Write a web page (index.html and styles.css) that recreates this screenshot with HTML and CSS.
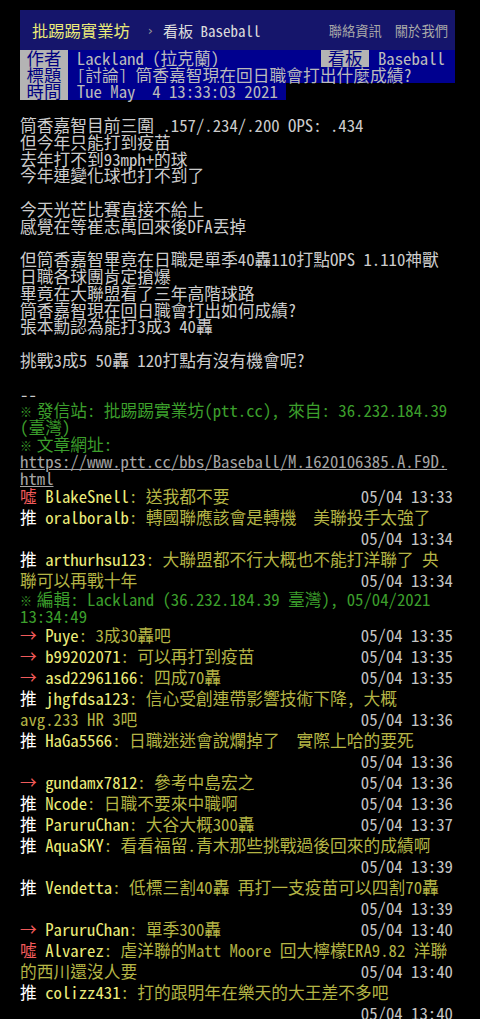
FILE: index.html
```html
<!DOCTYPE html>
<html lang="zh-Hant-TW">
<head>
    <meta charset="UTF-8">
    <meta name="viewport" content="width=device-width, initial-scale=1.0">
    <title>[討論] 筒香嘉智現在回日職會打出什麼成績? - 看板 Baseball - 批踢踢實業坊</title>
    <link rel="stylesheet" href="styles.css">
</head>
<body>
    <div class="page">
        <!-- Top bar -->
        <div class="topbar">
            <a class="logo" href="/bbs/">批踢踢實業坊</a>
            <span class="sep">›</span>
            <a class="board" href="/bbs/Baseball/index.html"><span class="board-label">看板 </span>Baseball</a>
            <div class="topbar-right">
                <a href="/about.html">聯絡資訊</a>
                <a href="/contact.html">關於我們</a>
            </div>
        </div>

        <!-- Article meta -->
        <div class="meta">
            <div class="metaline full">
                <span class="meta-tag">作者</span><span class="meta-value">Lackland (拉克蘭)</span>
                <span class="metaline-right"><span class="meta-tag">看板</span><span class="meta-value">Baseball</span></span>
            </div>
            <div class="metaline full">
                <span class="meta-tag">標題</span><span class="meta-value">[討論] 筒香嘉智現在回日職會打出什麼成績?</span>
            </div>
            <div class="metaline">
                <span class="meta-tag">時間</span><span class="meta-value">Tue May  4 13:33:03 2021</span>
            </div>
        </div>

        <!-- Article content -->
        <div class="bbs-screen">
            <div class="text">筒香嘉智目前三圍 .157/.234/.200 OPS: .434
但今年只能打到疫苗
去年打不到93mph+的球
今年連變化球也打不到了

今天光芒比賽直接不給上
感覺在等崔志萬回來後DFA丟掉

但筒香嘉智畢竟在日職是單季40轟110打點OPS 1.110神獸
日職各球團肯定搶爆
畢竟在大聯盟看了三年高階球路
筒香嘉智現在回日職會打出如何成績?
張本勳認為能打3成3 40轟

挑戰3成5 50轟 120打點有沒有機會呢?

--
<span class="f2"><span class="mark">※</span> 發信站: 批踢踢實業坊(ptt.cc), 來自: 36.232.184.39
(臺灣)</span>
<span class="f2"><span class="mark">※</span> 文章網址: </span><a class="link" href="https://www.ptt.cc/bbs/Baseball/M.1620106385.A.F9D.html">https://www.ptt.cc/bbs/Baseball/M.1620106385.A.F9D.
html</a></div>

            <!-- Pushes -->
            <div class="push"><span class="push-tag red">噓</span><span class="push-userid">BlakeSnell</span><span class="push-content">: 送我都不要</span><span class="push-time"> 05/04 13:33</span></div>
            <div class="push"><span class="push-tag">推</span><span class="push-userid">oralboralb</span><span class="push-content">: 轉國聯應該會是轉機　美聯投手太強了</span><span class="push-time"> 05/04 13:34</span></div>
            <div class="push"><span class="push-tag">推</span><span class="push-userid">arthurhsu123</span><span class="push-content">: 大聯盟都不行大概也不能打洋聯了 央
聯可以再戰十年</span><span class="push-time"> 05/04 13:34</span></div>
            <div class="text"><span class="f2"><span class="mark">※</span> 編輯: Lackland (36.232.184.39 臺灣), 05/04/2021
13:34:49</span></div>
            <div class="push"><span class="push-tag red">→</span><span class="push-userid">Puye</span><span class="push-content">: 3成30轟吧</span><span class="push-time"> 05/04 13:35</span></div>
            <div class="push"><span class="push-tag red">→</span><span class="push-userid">b99202071</span><span class="push-content">: 可以再打到疫苗</span><span class="push-time"> 05/04 13:35</span></div>
            <div class="push"><span class="push-tag red">→</span><span class="push-userid">asd22961166</span><span class="push-content">: 四成70轟</span><span class="push-time"> 05/04 13:35</span></div>
            <div class="push"><span class="push-tag">推</span><span class="push-userid">jhgfdsa123</span><span class="push-content">: 信心受創連帶影響技術下降, 大概
avg.233 HR 3吧</span><span class="push-time"> 05/04 13:36</span></div>
            <div class="push"><span class="push-tag">推</span><span class="push-userid">HaGa5566</span><span class="push-content">: 日職迷迷會說爛掉了　實際上哈的要死</span><span class="push-time"> 05/04 13:36</span></div>
            <div class="push"><span class="push-tag red">→</span><span class="push-userid">gundamx7812</span><span class="push-content">: 參考中島宏之</span><span class="push-time"> 05/04 13:36</span></div>
            <div class="push"><span class="push-tag">推</span><span class="push-userid">Ncode</span><span class="push-content">: 日職不要來中職啊</span><span class="push-time"> 05/04 13:36</span></div>
            <div class="push"><span class="push-tag">推</span><span class="push-userid">ParuruChan</span><span class="push-content">: 大谷大概300轟</span><span class="push-time"> 05/04 13:37</span></div>
            <div class="push"><span class="push-tag">推</span><span class="push-userid">AquaSKY</span><span class="push-content">: 看看福留.青木那些挑戰過後回來的成績啊</span><span class="push-time"> 05/04 13:39</span></div>
            <div class="push"><span class="push-tag">推</span><span class="push-userid">Vendetta</span><span class="push-content">: 低標三割40轟 再打一支疫苗可以四割70轟</span><span class="push-time"> 05/04 13:39</span></div>
            <div class="push"><span class="push-tag red">→</span><span class="push-userid">ParuruChan</span><span class="push-content">: 單季300轟</span><span class="push-time"> 05/04 13:40</span></div>
            <div class="push"><span class="push-tag red">噓</span><span class="push-userid">Alvarez</span><span class="push-content">: 虐洋聯的Matt Moore 回大檸檬ERA9.82 洋聯
的西川還沒人要</span><span class="push-time"> 05/04 13:40</span></div>
            <div class="push"><span class="push-tag">推</span><span class="push-userid">colizz431</span><span class="push-content">: 打的跟明年在樂天的大王差不多吧</span><span class="push-time"> 05/04 13:40</span></div>
        </div>
    </div>
</body>
</html>
```

FILE: styles.css
```css
body {
    margin: 0;
    padding: 0;
    background-color: #000;
    color: #ccc;
    font-family: "Noto Sans Mono CJK TC", "Noto Sans Mono CJK SC", "DejaVu Sans Mono", "Noto Sans CJK TC", monospace;
}
a {
    color: inherit;
    text-decoration: none;
}
.page {
    width: 435px;
    margin-left: 20px;
    padding-top: 10px;
}

/* top bar */
.topbar {
    display: flex;
    align-items: center;
    height: 40px;
    padding: 0 7px 0 12px;
    background-color: #15156b;
}
.logo {
    font-family: "Noto Sans CJK TC", sans-serif;
    font-size: 16.3px;
    color: #eaea78;
}
.sep {
    margin: 0 10px 0 18px;
    font-family: "DejaVu Sans", sans-serif;
    font-size: 13px;
    color: #999;
}
.board {
    font-size: 15px;
    color: #ddd;
}
.topbar-right {
    margin-left: auto;
    display: flex;
    gap: 13px;
    font-family: "Noto Sans CJK TC", sans-serif;
    font-size: 13.3px;
}
.topbar-right a {
    color: #a8a8a8;
}

/* meta */
.meta {
    font-size: 16.75px;
    line-height: 16.7px;
}
.metaline {
    display: flex;
    align-items: stretch;
}
.metaline.full {
    background-color: #00008f;
}
.meta-tag {
    padding: 0 6.5px;
    background-color: #b4b4b4;
    color: #000080;
    font-family: "Noto Sans CJK TC", sans-serif;
    font-size: 17.4px;
}
.meta-value {
    padding: 0 8px 0 9px;
    background-color: #00008f;
    color: #bbb;
    white-space: pre;
}
.metaline-right {
    margin-left: auto;
    display: flex;
}
.metaline-right .meta-value {
    padding-right: 10px;
}

/* content */
.bbs-screen {
    width: 433px;
    font-size: 16.75px;
    line-height: 16.8px;
}
.text {
    white-space: pre-wrap;
}
.bbs-screen > .text:first-child {
    padding-top: 16.8px;
}
.f2 {
    color: #3c9f2c;
}
.mark {
    display: inline-block;
    width: 8.4px;
    font-size: 12px;
    line-height: 12px;
}
.link {
    color: #a4a4a4;
    text-decoration: underline;
}

/* pushes */
.push {
    display: flow-root;
    line-height: 21px;
    white-space: pre-wrap;
}
.push-tag {
    display: inline-block;
    width: 3ch;
    color: #fff;
}
.push-tag.red {
    color: #f05a5a;
}
.push-userid {
    color: #eded7a;
}
.push-content {
    color: #b4b445;
}
.push-time {
    float: right;
    color: #c4c4c4;
}
```
